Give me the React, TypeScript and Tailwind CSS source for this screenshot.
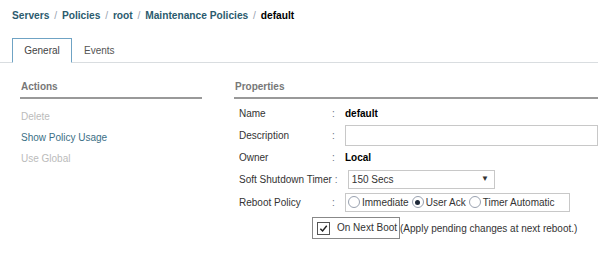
import React from 'react';

const Row: React.FC<{ label: string; children?: React.ReactNode; h?: string }> = ({ label, children, h = 'h-[22px]' }) => (
  <div className={`flex items-center whitespace-nowrap ${h}`}>
    <div className="min-w-[93px] shrink-0 pr-[3px]">{label}</div>
    <div className="w-[13px] shrink-0 text-gray-500">:</div>
    <div className="flex-1 flex items-center min-w-0">{children}</div>
  </div>
);

const Radio: React.FC<{ label: string; checked?: boolean }> = ({ label, checked }) => (
  <span className="flex items-center gap-[2px] mr-[3px]">
    <span className="w-[12px] h-[12px] rounded-full border border-gray-400 bg-white flex items-center justify-center">
      {checked && <span className="w-[5px] h-[5px] rounded-full bg-gray-800" />}
    </span>
    <span>{label}</span>
  </span>
);

export default function App() {
  return (
    <div className="w-[598px] h-[280px] bg-white text-[10px] text-[#333] overflow-hidden whitespace-nowrap" style={{ fontFamily: '"Liberation Sans", Arial, sans-serif' }}>
      <div className="pl-[12px] pt-[8px] h-[39px] text-[10.2px] font-bold text-[#2b5b6e]">
        Servers <span className="font-normal text-gray-400 mx-[2px]">/</span> Policies <span className="font-normal text-gray-400 mx-[2px]">/</span> root <span className="font-normal text-gray-400 mx-[2px]">/</span> Maintenance Policies <span className="font-normal text-gray-400 mx-[2px]">/</span> <span className="text-black">default</span>
      </div>

      <div className="flex items-end pl-[12px] border-b border-[#d9dde0] h-[24px]">
        <div className="h-[25px] w-[60px] border border-[#6fa3c4] border-b-white bg-white flex items-center justify-center -mb-px text-[#444]">General</div>
        <div className="h-[24px] ml-[12px] flex items-center text-[#555]">Events</div>
      </div>

      <div className="flex mt-[16px]">
        <div className="w-[202px] pl-[20px]">
          <div className="font-bold text-[#777] pl-[1px] pb-[3px] border-b-2 border-[#999]">Actions</div>
          <div className="pl-[1px] mt-[10px] h-[21px] text-[#bbb]">Delete</div>
          <div className="pl-[1px] h-[21px] text-[#3b6f86]">Show Policy Usage</div>
          <div className="pl-[1px] h-[21px] text-[#bbb]">Use Global</div>
        </div>
        <div className="flex-1 ml-[32px]">
          <div className="font-bold text-[#777] pl-[1px] pb-[3px] border-b-2 border-[#999]">Properties</div>
          <div className="pl-[5px] mt-[3px] text-[#333]">
            <Row label="Name"><span className="font-bold text-black">default</span></Row>
            <Row label="Description"><div className="h-[21px] flex-1 border border-[#c8c8c8] bg-white" /></Row>
            <Row label="Owner"><span className="font-bold text-black">Local</span></Row>
            <Row label="Soft Shutdown Timer" h="h-[22px]">
              <div className="h-[19px] w-[147px] border border-[#c8c8c8] flex items-center justify-between px-[3px]">
                <span>150 Secs</span>
                <span className="text-[8px] mr-[2px]">▼</span>
              </div>
            </Row>
            <Row label="Reboot Policy" h="h-[24px]">
              <div className="h-[19px] border border-[#c8c8c8] flex items-center px-[2px] w-[225px]">
                <Radio label="Immediate" />
                <Radio label="User Ack" checked />
                <Radio label="Timer Automatic" />
              </div>
            </Row>
            <div className="flex items-center h-[28px] ml-[73px]">
              <div className="h-[22px] border border-[#888] flex items-center pl-[4px] pr-[2px]">
                <span className="w-[13px] h-[13px] border border-[#555] flex items-center justify-center mr-[7px]">
                  <svg width="9" height="9" viewBox="0 0 10 10"><path d="M1.5 5.2 L4 7.8 L8.6 2" fill="none" stroke="#222" strokeWidth="1.6" /></svg>
                </span>
                <span className="self-start mt-[2px]">On Next Boot</span>
              </div>
              <span>(Apply pending changes at next reboot.)</span>
            </div>
          </div>
        </div>
      </div>
    </div>
  );
}
